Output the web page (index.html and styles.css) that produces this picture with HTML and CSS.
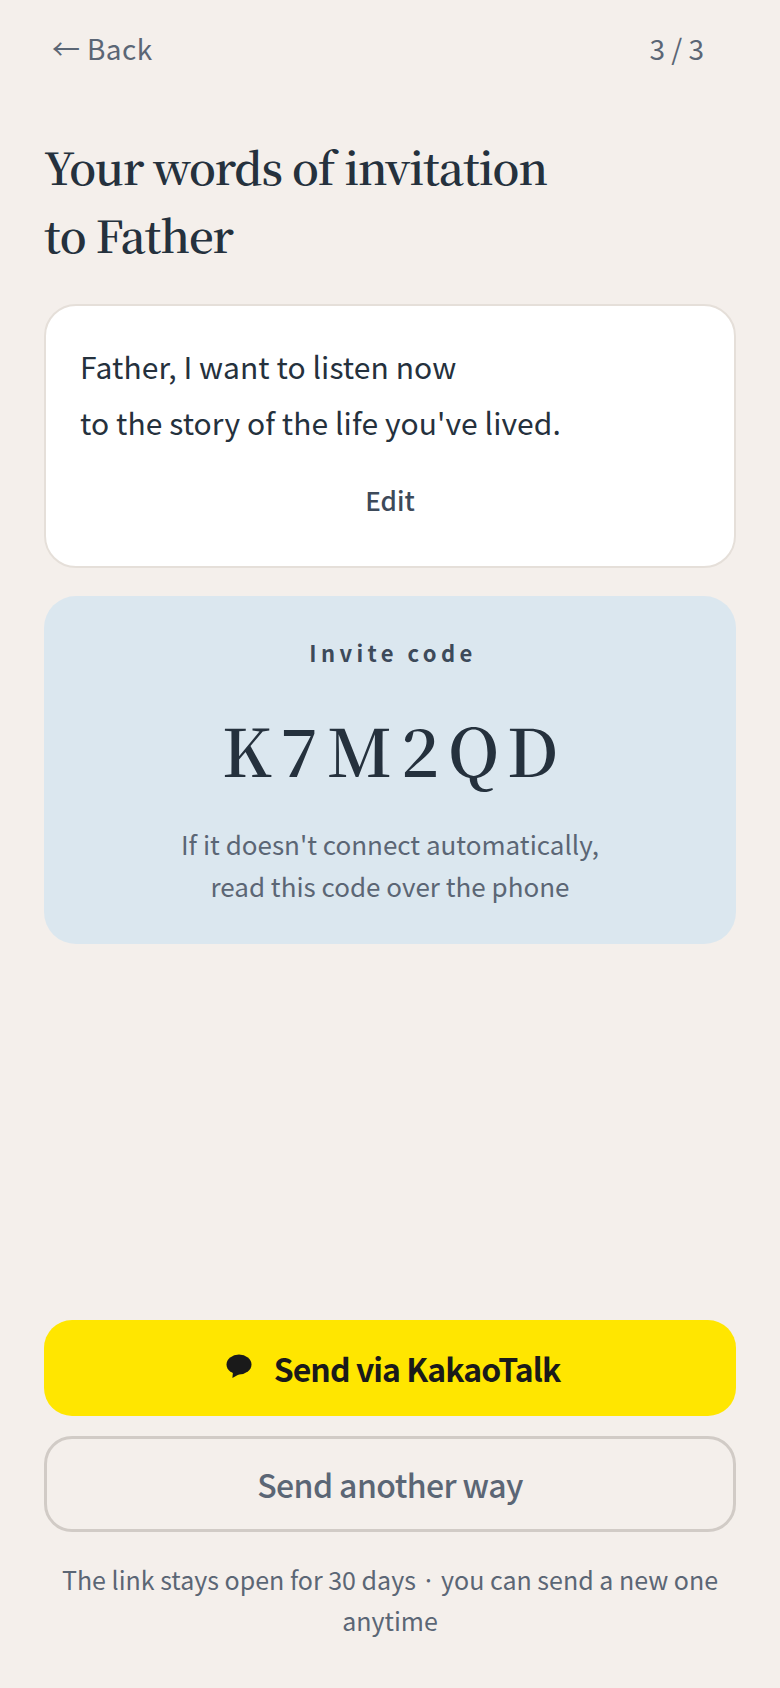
FILE: index.html
```html
<!DOCTYPE html>
<html lang="en">
<head>
<meta charset="utf-8">
<title>Invitation</title>
<link rel="stylesheet" href="styles.css">
</head>
<body>
<main class="screen">
  <header class="topbar">
    <a class="back"><span class="arrow">←</span> Back</a>
    <span class="step">3 / 3</span>
  </header>
  <h1 class="title">Your words of invitation<br>to Father</h1>
  <section class="message">
    <p class="message-text">Father, I want to listen now<br>to the story of the life you've lived.</p>
    <button class="edit">Edit</button>
  </section>
  <section class="code-box">
    <div class="code-label">Invite code</div>
    <div class="code">K7M2QD</div>
    <p class="code-note">If it doesn't connect automatically,<br>read this code over the phone</p>
  </section>
  <div class="actions">
    <button class="btn kakao">
      <svg class="kakao-icon" viewBox="0 0 26 24" width="26" height="24" aria-hidden="true"><ellipse cx="13" cy="10.500" rx="12.500" ry="10" fill="#1a1a1a"/><path d="M7 17.500L6.400 24L13.500 20z" fill="#1a1a1a"/></svg>
      <span>Send via KakaoTalk</span>
    </button>
    <button class="btn outline">Send another way</button>
    <p class="foot">The link stays open for 30 days · you can send a new one anytime</p>
  </div>
</main>
</body>
</html>
```
FILE: styles.css
```css
* { box-sizing: border-box; }
html, body { margin: 0; padding: 0; }
body {
  background: #f4efeb;
  font-family: "Noto Sans CJK KR", "Noto Sans", sans-serif;
  color: #25313d;
}
.screen {
  width: 780px;
  height: 1688px;
  padding: 0 44px;
  display: flex;
  flex-direction: column;
}
.topbar {
  display: flex;
  justify-content: space-between;
  align-items: center;
  height: 40px;
  margin-top: 28px;
  padding: 0 32px 0 8px;
  font-size: 28px;
  color: #5b6675;
}
.back, .step { line-height: 40px; }
.back { letter-spacing: 0.4px; }
.title {
  margin: 64px 0 0;
  font-family: "Noto Serif CJK KR", "Liberation Serif", serif;
  font-weight: 600;
  font-size: 44px;
  line-height: 68px;
  letter-spacing: -1.1px;
  color: #25313d;
}
.message {
  margin-top: 36px;
  height: 264px;
  background: #fff;
  border: 2px solid #e5dfd9;
  border-radius: 32px;
  padding: 32px 34px 0;
  display: flex;
  flex-direction: column;
}
.message-text {
  margin: 0;
  font-size: 30px;
  line-height: 56px;
  letter-spacing: 0.08px;
  color: #25313d;
}
.edit {
  margin-top: 31px;
  border: 0;
  background: none;
  padding: 0;
  font: inherit;
  font-size: 26px;
  font-weight: 500;
  line-height: 38px;
  color: #3d4a5a;
}
.code-box {
  margin-top: 28px;
  height: 348px;
  background: #dbe7ef;
  border-radius: 32px;
  padding: 40px 0 0;
  text-align: center;
}
.code-label {
  padding-left: 6px;
  font-size: 22px;
  font-weight: 700;
  line-height: 32px;
  letter-spacing: 4.4px;
  color: #3d4a5a;
}
.code {
  margin-top: 36px;
  padding-left: 9px;
  font-family: "Noto Serif CJK KR", "Liberation Serif", serif;
  font-size: 66px;
  font-weight: 600;
  line-height: 90px;
  letter-spacing: 8.9px;
  color: #25313d;
}
.code-note {
  margin: 29px 0 0;
  font-size: 26px;
  line-height: 42px;
  color: #5b6675;
}
.actions {
  margin-top: auto;
  padding-bottom: 47px;
  display: flex;
  flex-direction: column;
}
.btn {
  height: 96px;
  border-radius: 28px;
  font-family: inherit;
  font-size: 32px;
  display: flex;
  align-items: center;
  justify-content: center;
}
.kakao {
  background: #ffe600;
  border: 0;
  font-weight: 700;
  letter-spacing: -0.96px;
  color: #1a1a1a;
  gap: 22px;
  padding-left: 12px;
}
.kakao-icon { margin-bottom: 4px; }
.outline {
  margin-top: 20px;
  background: transparent;
  border: 3px solid #d1cbc6;
  font-weight: 500;
  letter-spacing: -0.6px;
  color: #5b6675;
}
.foot {
  margin: 27px 0 0;
  text-align: center;
  font-size: 25px;
  line-height: 41px;
  color: #5b6675;
}
```
